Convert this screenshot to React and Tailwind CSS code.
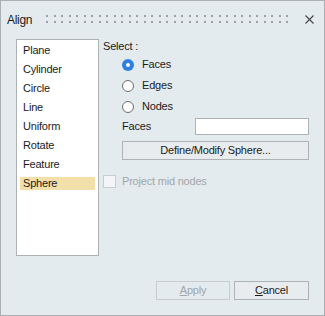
import React, { useState } from 'react';

const items = ['Plane', 'Cylinder', 'Circle', 'Line', 'Uniform', 'Rotate', 'Feature', 'Sphere'];
const modes = ['Faces', 'Edges', 'Nodes'];

const Grip = () => {
  // two rows of small dots, like a docking grip
  const cols = Array.from({ length: 33 }, (_, i) => Math.round(i * 7.5));
  return (
    <svg width="250" height="10" className="block">
      {cols.map((x) => (
        <g key={x} fill="#9aa0a4">
          <rect x={x} y="0" width="2" height="2" />
          <rect x={x} y="6" width="2" height="2" />
        </g>
      ))}
    </svg>
  );
};

const Radio = ({ checked }) =>
  checked ? (
    <span className="w-[12px] h-[12px] rounded-full bg-[#2d7fe0] flex items-center justify-center">
      <span className="w-[4px] h-[4px] rounded-full bg-white" />
    </span>
  ) : (
    <span className="w-[12px] h-[12px] rounded-full border border-[#6e6e6e] bg-white" />
  );

const App = () => {
  const [selected, setSelected] = useState('Sphere');
  const [mode, setMode] = useState('Faces');

  return (
    <div
      className="w-[325px] h-[316px] border border-[#aab0b3] bg-[#e4ebee] flex flex-col text-[11px] tracking-[-0.2px] text-[#1b1b1b]"
      style={{ fontFamily: '"Liberation Sans", Arial, sans-serif' }}
    >
      {/* Title */}
      <div className="h-[37px] flex items-center pl-[6px] pr-[10px] shrink-0">
        <span className="text-[12px] tracking-[-0.3px]">Align</span>
        <div className="ml-[14px] mt-[1px]">
          <Grip />
        </div>
        <svg width="9" height="9" className="ml-auto" viewBox="0 0 9 9">
          <path d="M0.5 0.5 L8.5 8.5 M8.5 0.5 L0.5 8.5" stroke="#444" strokeWidth="1.1" />
        </svg>
      </div>

      <div className="flex pl-[15px] mt-[1px]">
        {/* Type list */}
        <div className="w-[83px] h-[217px] border border-[#adb2b5] bg-white pt-[1px]">
          {items.map((it) => (
            <div key={it} className="h-[19px] flex items-center cursor-default" onClick={() => setSelected(it)}>
              <span
                className={`ml-[3px] w-[75px] h-[13px] flex items-center pl-[3px] ${
                  selected === it ? 'bg-[#f2dfaa]' : ''
                }`}
              >
                {it}
              </span>
            </div>
          ))}
        </div>

        {/* Options */}
        <div className="ml-[4px] w-[206px] flex flex-col -mt-[1px]">
          <div className="h-[16px] flex items-center">Select :</div>
          {modes.map((m) => (
            <div key={m} className="h-[21px] flex items-center pl-[19px] gap-[8px]" onClick={() => setMode(m)}>
              <Radio checked={mode === m} />
              <span>{m}</span>
            </div>
          ))}
          <div className="h-[19px] flex items-center pl-[19px]">
            <span>Faces</span>
            <input className="ml-auto w-[114px] h-[17px] border border-[#adb2b5] bg-white outline-none px-1 text-[11px]" />
          </div>
          <button className="mt-[5px] ml-[19px] w-[187px] h-[19px] border border-[#adb2b5] bg-[#e9ecee] flex items-center justify-center">
            Define/Modify Sphere...
          </button>
          <div className="mt-[15px] h-[13px] flex items-center gap-[6px]">
            <span className="w-[13px] h-[13px] border border-[#c9cdd0] bg-[#f3f5f6]" />
            <span className="text-[#a2a6a9]">Project mid nodes</span>
          </div>
        </div>
      </div>

      {/* Footer buttons */}
      <div className="mt-auto flex justify-end gap-[4px] pr-[15px] pb-[15px]">
        <button className="w-[74px] h-[19px] border border-[#c8ccce] bg-[#e4ebee] text-[#a2a6a9] flex items-center justify-center">
          <span>
            <span className="underline">A</span>pply
          </span>
        </button>
        <button className="w-[75px] h-[19px] border border-[#adb2b5] bg-[#e9ecee] flex items-center justify-center">
          <span>
            <span className="underline">C</span>ancel
          </span>
        </button>
      </div>
    </div>
  );
};

export default App;
